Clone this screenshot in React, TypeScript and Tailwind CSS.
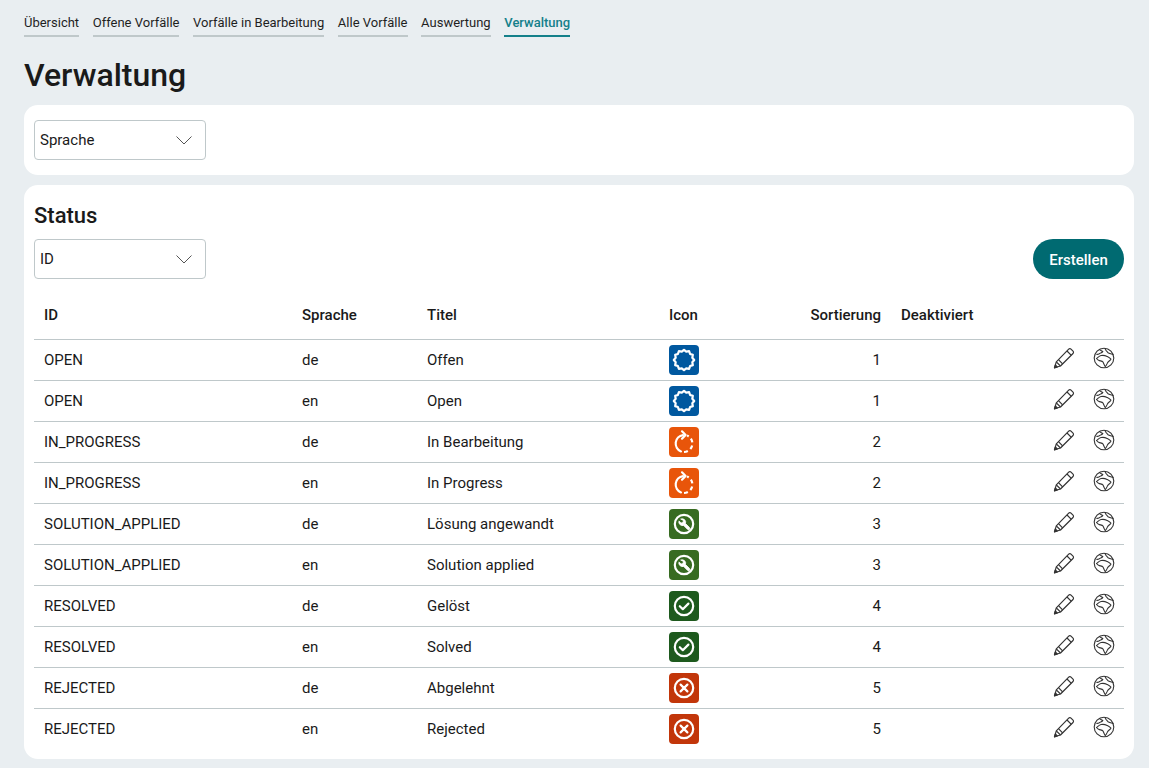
const tabs = ['Übersicht', 'Offene Vorfälle', 'Vorfälle in Bearbeitung', 'Alle Vorfälle', 'Auswertung', 'Verwaltung']

type StatusKey = 'open' | 'progress' | 'applied' | 'resolved' | 'rejected'

const rows: { id: string; lang: string; title: string; icon: StatusKey; sort: number }[] = [
  { id: 'OPEN', lang: 'de', title: 'Offen', icon: 'open', sort: 1 },
  { id: 'OPEN', lang: 'en', title: 'Open', icon: 'open', sort: 1 },
  { id: 'IN_PROGRESS', lang: 'de', title: 'In Bearbeitung', icon: 'progress', sort: 2 },
  { id: 'IN_PROGRESS', lang: 'en', title: 'In Progress', icon: 'progress', sort: 2 },
  { id: 'SOLUTION_APPLIED', lang: 'de', title: 'Lösung angewandt', icon: 'applied', sort: 3 },
  { id: 'SOLUTION_APPLIED', lang: 'en', title: 'Solution applied', icon: 'applied', sort: 3 },
  { id: 'RESOLVED', lang: 'de', title: 'Gelöst', icon: 'resolved', sort: 4 },
  { id: 'RESOLVED', lang: 'en', title: 'Solved', icon: 'resolved', sort: 4 },
  { id: 'REJECTED', lang: 'de', title: 'Abgelehnt', icon: 'rejected', sort: 5 },
  { id: 'REJECTED', lang: 'en', title: 'Rejected', icon: 'rejected', sort: 5 },
]

// scalloped ring for the "open" status
const scallop = Array.from({ length: 24 }, (_, i) => {
  const r = i % 2 === 0 ? 10.2 : 8.6
  const a = (i / 24) * Math.PI * 2
  return `${(15 + r * Math.cos(a)).toFixed(2)},${(15 + r * Math.sin(a)).toFixed(2)}`
}).join(' ')

function StatusIcon({ type }: { type: StatusKey }) {
  const bg = {
    open: 'bg-[#00589f]',
    progress: 'bg-[#e8550a]',
    applied: 'bg-[#376b21]',
    resolved: 'bg-[#1e5a1e]',
    rejected: 'bg-[#c2360a]',
  }[type]

  return (
    <div className={`h-[30px] w-[30px] rounded-[4px] ${bg}`}>
      <svg viewBox="0 0 30 30" className="h-[30px] w-[30px]" fill="none" stroke="white" strokeWidth="2.2" strokeLinecap="round" strokeLinejoin="round">
        {type === 'open' && <polygon points={scallop} />}
        {type === 'progress' && (
          <>
            <path d="M14 8.100a8.500 8.500 0 0 0-2 16.300" />
            <path d="M15 25a8.500 8.500 0 0 0 3-16.400" strokeLinecap="butt" strokeDasharray="4 3" />
            <path d="M13 4.300l3.600 3.700L13 11.700" />
          </>
        )}
        {type === 'applied' && (
          <>
            <circle cx="15" cy="15" r="9.200" />
            <path d="M12 9.900a3.600 3.600 0 0 1 4.500 4.600l4 4a1.300 1.300 0 0 1-1.900 1.900l-4-4a3.600 3.600 0 0 1-4.600-4.500l2.100 2.100 1.900-.4.400-1.900z" fill="white" strokeWidth="0.8" />
          </>
        )}
        {type === 'resolved' && (
          <>
            <circle cx="15" cy="15" r="9.200" />
            <path d="M10.800 15.200l3 3 5.600-5.600" />
          </>
        )}
        {type === 'rejected' && (
          <>
            <circle cx="15" cy="15" r="9.200" />
            <path d="M11.600 11.600l6.800 6.800M18.400 11.600l-6.800 6.800" />
          </>
        )}
      </svg>
    </div>
  )
}

function PencilIcon() {
  return (
    <svg viewBox="0 0 22 22" className="h-[22px] w-[22px]" fill="none" stroke="#333" strokeWidth="1.200" strokeLinejoin="round">
      <path d="M1.500 20.800l1.800-6L15.700 2.200a1.600 1.600 0 0 1 2.300 0l2 2a1.600 1.600 0 0 1 0 2.300L7.500 19z" />
      <path d="M3.300 14.800l4.200 4.200M5.700 12.800l3.900 4M14 4l4.100 4.100" />
      <path d="M1.500 20.800l.8-2.800 2 2z" fill="#333" />
    </svg>
  )
}

function GlobeIcon() {
  return (
    <svg viewBox="0 0 22 22" className="h-[22px] w-[22px]" fill="none" stroke="#333" strokeWidth="1.100" strokeLinejoin="round" strokeLinecap="round">
      <circle cx="11" cy="11" r="9.800" />
      <path d="M6.500 2.500c.8 1 2.200 1.200 3.300 2-.5 1.300-2.500 1.300-3.600 2.200-.7.500-1.700.8-2.500.6" />
      <path d="M3.500 11.500c1.300-.7 2.500-2.600 4.600-3 1.900-.3 4-.1 5.500.7 1.600.9 3.300 1.700 4.300 3-1 1.600-2.800 2.300-3.600 4-.6 1.200-1.100 2.800-2 3.400-1-1.100-1.500-3-2.300-4.500-.7-1.300-2.200-1.100-3.600-1.500-1.100-.3-2-1-2.900-2.100z" />
      <path d="M12 1.500c.4 1.800 1.800 2.900 3 4.200 1.500.9 3.200 1.300 5 1.800" />
    </svg>
  )
}

function FakeSelect({ value }: { value: string }) {
  return (
    <div className="flex h-10 w-[172px] items-center justify-between rounded-[4px] border border-[#bfc8ca] bg-white pl-[5px] pr-[13px] text-[15px] text-[#1a1a1a]">
      <span>{value}</span>
      <svg viewBox="0 0 16 9" className="h-[9px] w-[16px]" fill="none" stroke="#555" strokeWidth="1">
        <path d="M.5.500L8 8l7.500-7.500" />
      </svg>
    </div>
  )
}

export default function App() {
  return (
    <div className="h-[768px] overflow-hidden bg-[#e9eef1] px-6 pt-[14px] font-['Roboto',sans-serif] text-[#1a1a1a]">
      <nav className="flex gap-[13.6px]">
        {tabs.map((tab, i) => {
          const active = i === tabs.length - 1
          return (
            <a
              key={tab}
              className={`block h-[23px] border-b-2 text-[13px] leading-[18px] ${
                active ? 'border-[#14808a] font-medium text-[#14808a]' : 'border-[#bfc8ca] text-[#1f1f1f]'
              }`}
            >
              {tab}
            </a>
          )
        })}
      </nav>

      <h1 className="mt-[17px] h-[51px] text-[32px] font-medium leading-[42px] text-[#1a1a1a]">Verwaltung</h1>

      <section className="w-[1110px] rounded-[14px] bg-white px-[10px] py-[15px]">
        <FakeSelect value="Sprache" />
      </section>

      <section className="mt-[10px] w-[1110px] rounded-[14px] bg-white px-[10px] pb-[9px] pt-[16px]">
        <h2 className="h-[38px] text-[22px] font-medium leading-[29px]">Status</h2>
        <div className="flex items-center justify-between">
          <FakeSelect value="ID" />
          <button className="h-10 w-[91px] rounded-full bg-[#006a71] pt-[2px] text-[15px] font-medium text-white">Erstellen</button>
        </div>

        <table className="mt-[16px] w-[1090px] table-fixed border-collapse text-[15px]">
          <colgroup>
            <col className="w-[258px]" />
            <col className="w-[125px]" />
            <col className="w-[242px]" />
            <col className="w-[100px]" />
            <col className="w-[132px]" />
            <col className="w-[100px]" />
            <col />
          </colgroup>
          <thead>
            <tr className="h-[44px] border-b border-[#bfc8ca] text-left font-medium">
              <th className="px-[10px] pb-[3px] font-medium">ID</th>
              <th className="px-[10px] pb-[3px] font-medium">Sprache</th>
              <th className="px-[10px] pb-[3px] font-medium">Titel</th>
              <th className="px-[10px] pb-[3px] font-medium">Icon</th>
              <th className="px-[10px] pb-[3px] text-right font-medium">Sortierung</th>
              <th className="px-[10px] pb-[3px] font-medium">Deaktiviert</th>
              <th />
            </tr>
          </thead>
          <tbody>
            {rows.map((row, i) => (
              <tr key={`${row.id}-${row.lang}`} className={`h-[41px] border-b ${i < rows.length - 1 ? 'border-[#bfc8ca]' : 'border-transparent'}`}>
                <td className="px-[10px] pt-[1px]">{row.id}</td>
                <td className="px-[10px] pt-[1px]">{row.lang}</td>
                <td className="px-[10px] pt-[1px]">{row.title}</td>
                <td className="px-[10px]">
                  <StatusIcon type={row.icon} />
                </td>
                <td className="px-[10px] pt-[1px] text-right">{row.sort}</td>
                <td className="px-[10px]" />
                <td className="pb-[4px] pr-[9px]">
                  <div className="flex justify-end gap-[18px]">
                    <PencilIcon />
                    <GlobeIcon />
                  </div>
                </td>
              </tr>
            ))}
          </tbody>
        </table>
      </section>
    </div>
  )
}
